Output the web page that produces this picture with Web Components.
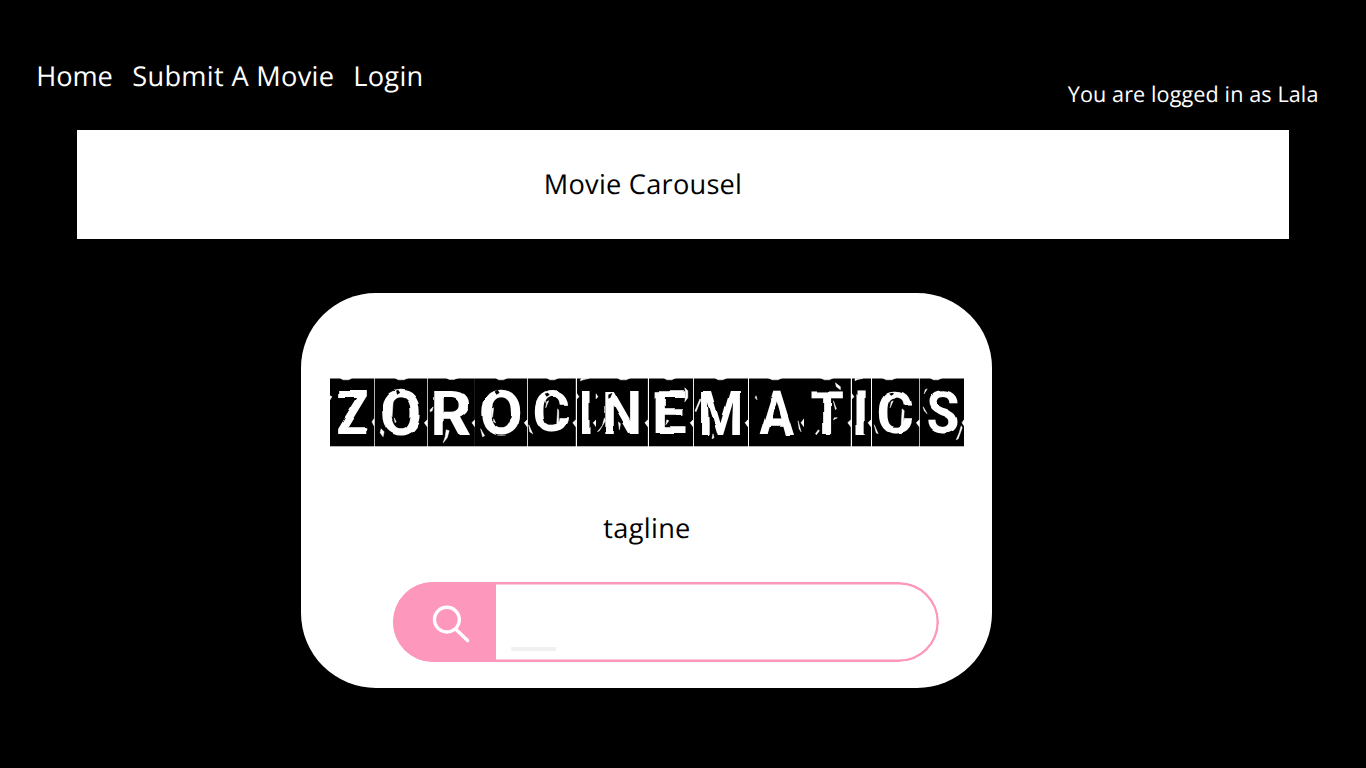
<!DOCTYPE html>
<html lang="en">
<head>
<meta charset="utf-8">
<title>Zorocinematics</title>
<style>
html,body{margin:0;height:100%;background:#000;overflow:hidden}
</style>
</head>
<body>
<movie-app></movie-app>
<script>
function define(name, html, setup){
  const tpl=document.createElement('template');
  tpl.innerHTML=html;
  customElements.define(name,class extends HTMLElement{
    constructor(){super();this.attachShadow({mode:'open'}).append(tpl.content.cloneNode(true));}
    connectedCallback(){if(setup&&!this.ready){this.ready=true;setup(this,this.shadowRoot);}}
  });
}

define('nav-link',`<style>:host{display:block;white-space:nowrap}a{color:inherit;text-decoration:none}</style><a><slot></slot></a>`);

define('site-header',`<style>
:host{display:flex;justify-content:space-between;box-sizing:border-box;height:129.6px;padding:57px 47.5px 0 36.2px;color:#fff}
nav{display:flex;gap:18.8px;font-size:27.2px;line-height:37px;letter-spacing:.31px}
nav-link:first-child{letter-spacing:-.1px;margin-right:.8px}
.user{font-size:21.6px;line-height:30px;padding-top:23px;letter-spacing:.1px;white-space:nowrap}
</style><nav><nav-link>Home</nav-link><nav-link>Submit A Movie</nav-link><nav-link>Login</nav-link></nav><div class="user"><slot></slot></div>`);

define('movie-carousel',`<style>
:host{display:block;box-sizing:border-box;width:1211.5px;height:109.9px;margin-left:77px;padding:35.4px 0 0 466.8px;background:#fff;color:#000;font-size:27.2px;line-height:37px;letter-spacing:.24px}
</style><slot></slot>`);

// Each tile: letter, left and width of the block, ink box of its letter, then its scratches.
const TILES=[
 ['Z',330,44.3,338,391.3,367.3,434.7,'M330 396l2 1l-2 3zM340 378h12l-3 2h-6zM374 419l-2 3l2 4z'],
 ['O',374.9,52.3,381.5,389,420,436,'M391 403l2-1l-1 15l-2-3zM394 418l2 4l-1 1zM381 429l3 3l-1 5l-3-4zM395 378h13l-4 2h-6zM427.2 420l-3 3l3 4z','M396 391l2-1l2 3l-3 2z'],
 ['R',427.8,46.9,434,390.5,470,435,'M430 410l3-3l-1 4l-2 1zM446 430l3 1l-2 7l-4 5l2-6zM446 378h12l-4 1.6h-5zM474.7 420l-3 3l3 4z'],
 ['O',475.4,52.2,482,389,521,436,'M492 409l2-1l-1 9l-1 1zM494 419l2 4l-2-1zM481 429l4 7l-2 1zM496 378h12l-4 2h-5zM527.6 420l-3 3l3 4z','M495 392l3-2l2 3l-3 2z'],
 ['C',528.3,47.8,534.7,390,568.7,433.6,'M547 402l2-1l-3 7zM558 409l1 2v15l-2-1zM529 425l4 9l-3-2zM547 378h12l-4 2h-5zM576.1 420l-3 3l3 4z','M545 394l3-1l2 2l-3 2z'],
 ['I',576.8,19.1,581.2,391,590,434.5,'M581 378.5h8l-6 1.5l-3 1zM576.8 394l2 3l-2 2zM595.9 420l-3 3l3 4z'],
 ['N',596.6,51.9,606,391,640,434.5,'M605 418l1 3l-6 10l-2 1l5-6zM619 422l2 2l-1 6zM618 378h13l-4 2h-6zM596.6 394l2 3l-2 2zM648.5 420l-3 3l3 4z','M609 395l4-2l-2 5l-2 1z'],
 ['E',649.2,44.1,655.8,391,686,433.3,'M685 388l3 3v7l-3 4l1-8zM667 420l2 1l-3 4zM664 378h12l-4 2h-5zM693.3 420l-3 3l3 4z'],
 ['M',694,54,701,390.5,740,435,'M700 399l1 1l-5 12l-1-1zM713 434l1 4l-2 1zM715 378h12l-4 2h-5zM748 420l-3 3l3 4z'],
 ['A',748.9,55,759.4,390,794,434.8,'M771 398l3 7v2l-2-3zM756 396l1 4l-2-2zM798 421l3 11l-2-3zM768 378h14l-4 2h-6zM803.9 419l-3 4l3 4z'],
 ['T',804.6,46.8,812,391.5,844,434.5,'M836 383l5 4v3l-4-3zM834 401l3 8l-1 1zM835 418h3l-4 2zM819 430l1 1l-3 4l-1-1zM821 378h13l-4 2h-5zM851.4 420l-3 3l3 4z'],
 ['I',852,19,855.9,391,865.4,435,'M855 378.5h8l-6 1.5l-2 1zM852 394l2 3l-2 2zM871 420l-3 3l3 4z'],
 ['C',871.8,47.3,878,390,912,434,'M891 402l2-1l-3 7zM902 409l2 2l-1 15l-2-1zM874 425l4 9l-2-1zM882 378h14l-4 2h-6zM919.1 420l-3 3l3 4z','M889 394l3-1l2 1l-3 2z'],
 ['S',919.8,44,927,390,958,434.5,'M927 389l-3 5l1-4zM923 407l4 7l-3-3zM961 426l1 2l-4 11l-2 1l3-7zM930 378h12l-4 2h-5zM963.8 420l-2 3l2 3z']
];
define('letter-tile',`<style>:host{display:block;flex:none}svg{display:block;width:100%;height:68.6px;overflow:visible}text{font:700 60px Roboto,sans-serif;fill:#fff}.scratch{stroke:#fff;stroke-width:.5}</style>
<svg><defs><filter id="rough" x="-10%" y="-10%" width="120%" height="120%"><feTurbulence type="fractalNoise" baseFrequency=".05" numOctaves="1" seed="4"/><feDisplacementMap in="SourceGraphic" scale="4" xChannelSelector="R" yChannelSelector="G"/><feGaussianBlur stdDeviation=".35"/></filter></defs><rect fill="#000"/><g filter="url(#rough)"><text></text></g><path class="scratch" fill="#fff"/><path class="chip" fill="#000"/></svg>`,(el,root)=>{
  const [ch,x,w,x0,y0,x1,y1,scratch,chip]=TILES[+el.getAttribute('index')];
  el.style.width=w+'px';
  root.querySelector('svg').setAttribute('viewBox',`${x} 378.2 ${w} 68.6`);
  const r=root.querySelector('rect');
  for(const [k,v] of Object.entries({x,y:378.7,width:w,height:67.8}))r.setAttribute(k,v);
  const c=document.createElement('canvas').getContext('2d');
  c.font='700 600px Roboto, sans-serif';
  const m=c.measureText(ch);
  const left=m.actualBoundingBoxLeft/10,right=m.actualBoundingBoxRight/10,up=m.actualBoundingBoxAscent/10,down=m.actualBoundingBoxDescent/10;
  const sx=(x1-x0)/(right+left);
  const sy=(y1-y0)/(up+down);
  const t=root.querySelector('text');
  t.textContent=ch;
  t.setAttribute('transform',`translate(${x0+left*sx} ${y1-down*sy}) scale(${sx} ${sy})`);
  root.querySelector('.scratch').setAttribute('d',scratch);
  root.querySelector('.chip').setAttribute('d',chip||'');
});
define('tile-title',`<style>:host{display:flex;gap:.7px;width:634px;height:68.6px}</style>`,(el,root)=>{
  TILES.forEach((t,i)=>{
    const n=document.createElement('letter-tile');
    n.setAttribute('index',i);
    if(i)n.style.marginLeft=(t[1]-TILES[i-1][1]-TILES[i-1][2]-.7)+'px';
    root.append(n);
  });
});

define('search-bar',`<style>
:host{display:flex;position:relative;box-sizing:border-box;width:546px;height:80px;border-radius:40px;overflow:hidden;background:#fff}
.frame{position:absolute;inset:0}
.btn{width:103.2px;background:#fd97bc}
.icon{display:block;margin:22.2px 0 0 37px}
.field{flex:1;display:flex;align-items:flex-end;box-sizing:border-box;padding:0 0 11px 14.6px}
.caret{width:45px;height:4px;background:#f1f1f1}
</style><div class="btn"><svg class="icon" width="42" height="42" viewBox="430 604 42 42" fill="none" stroke="#fff" stroke-width="3.4" stroke-linecap="round"><circle cx="446.9" cy="619.6" r="12.4"/><path d="M456 629.5L467.6 640.6"/></svg></div><div class="field"><div class="caret"></div></div><svg class="frame" width="546" height="80"><rect x="1.25" y="1.25" width="543.5" height="77.5" rx="38.75" fill="none" stroke="#fd97bc" stroke-width="2.5"/></svg>`);

define('hero-card',`<style>
:host{display:flex;flex-direction:column;box-sizing:border-box;width:691.5px;height:395.5px;margin:53.3px 0 0 300.7px;padding-top:85.4px;border-radius:75px;background:#fff;color:#000}
tile-title{margin-left:29.3px}
.tag{margin:62.2px 0 0 1.2px;text-align:center;font-size:27.2px;line-height:37px;letter-spacing:.3px}
search-bar{margin:36px 0 0 92.3px}
</style><tile-title></tile-title><div class="tag"><slot></slot></div><search-bar></search-bar>`);

define('movie-app',`<style>:host{display:block;width:1366px;height:768px;overflow:hidden;background:#000;font-family:"Open Sans","Noto Sans",sans-serif;text-rendering:geometricPrecision}</style>
<site-header>You are logged in as Lala</site-header><movie-carousel>Movie Carousel</movie-carousel><hero-card>tagline</hero-card>`);
</script>
</body>
</html>
